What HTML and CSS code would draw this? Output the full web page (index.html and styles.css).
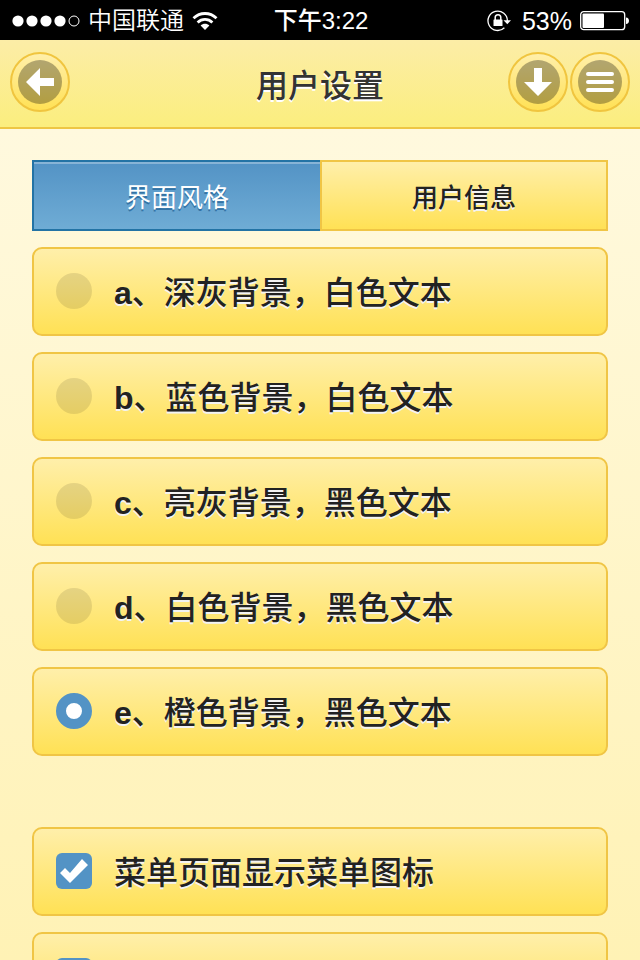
FILE: index.html
```
<!DOCTYPE html>
<html lang="zh-CN">
<head>
  <meta charset="UTF-8">
  <meta name="viewport" content="width=device-width, initial-scale=1">
  <title>用户设置</title>
  <link rel="stylesheet" href="styles.css">
</head>
<body>
  <div class="statusbar">
    <div class="status-left">
      <svg width="68" height="12" viewBox="0 0 68 12" aria-hidden="true">
        <g fill="#fff">
          <circle cx="6" cy="6" r="5.6"/>
          <circle cx="20" cy="6" r="5.6"/>
          <circle cx="34" cy="6" r="5.6"/>
          <circle cx="48" cy="6" r="5.6"/>
        </g>
        <circle cx="62" cy="6" r="5" fill="none" stroke="#fff"/>
      </svg>
      <span class="carrier">中国联通</span>
      <svg width="26" height="20" viewBox="0 0 26 20" fill="none" stroke="#fff" stroke-width="2.8" aria-hidden="true">
        <path d="M1.5 7.3C8 .9 18 .9 24.5 7.3"/>
        <path d="M5.6 11.4c4.2-4 10.6-4 14.8 0"/>
        <path d="M13 19l-4.4-4.5c2.5-2.2 6.3-2.2 8.8 0z" fill="#fff" stroke="none"/>
      </svg>
    </div>
    <div class="clock">下午3:22</div>
    <div class="status-right">
      <svg width="25" height="22" viewBox="0 0 25 22" fill="none" stroke="#fff" aria-hidden="true">
        <path d="M17.4 17.8A9.7 9.7 0 1 1 20.4 11" stroke-width="1.3"/>
        <path d="M16.5 10.2H24l-3.7 4z" fill="#fff" stroke="none"/>
        <rect x="6.5" y="9.5" width="9" height="6.5" rx=".5" fill="#fff" stroke="none"/>
        <path d="M8.2 10V7.500a2.8 2.8 0 0 1 5.6 0V10" stroke-width="1.5"/>
      </svg>
      <span class="percent">53%</span>
      <svg width="50" height="20" viewBox="0 0 50 20" aria-hidden="true">
        <rect x=".7" y=".7" width="44" height="18" rx="3" fill="none" stroke="#fff" stroke-width="1.3"/>
        <rect x="2.5" y="2.5" width="21.5" height="14.5" rx="1" fill="#fff"/>
        <path d="M46 6.500c4 .3 4 6.300 0 6.600z" fill="#fff"/>
      </svg>
    </div>
  </div>

  <header class="header">
    <div class="header-side">
      <button class="round-btn" type="button" aria-label="返回">
        <svg width="44" height="44" viewBox="0 0 44 44"><path d="M8 22L22 8v10h14v8H22v10z" fill="#fff"/></svg>
      </button>
    </div>
    <h1>用户设置</h1>
    <div class="header-side header-right">
      <button class="round-btn" type="button" aria-label="下载">
        <svg width="44" height="44" viewBox="0 0 44 44"><path d="M22 36L8 22h10V8h8v14h10z" fill="#fff"/></svg>
      </button>
      <button class="round-btn" type="button" aria-label="菜单">
        <svg width="44" height="44" viewBox="0 0 44 44" stroke="#fff" stroke-width="4" stroke-linecap="round"><path d="M10 14h24M10 22h24M10 30h24"/></svg>
      </button>
    </div>
  </header>

  <main class="content">
    <nav class="tabs">
      <button class="tab active" type="button">界面风格</button>
      <button class="tab" type="button">用户信息</button>
    </nav>

    <form class="settings">
      <div class="group">
        <label class="option"><input type="radio" name="theme" value="a"><span><b>a</b>、深灰背景，白色文本</span></label>
        <label class="option"><input type="radio" name="theme" value="b"><span><b>b</b>、蓝色背景，白色文本</span></label>
        <label class="option"><input type="radio" name="theme" value="c"><span><b>c</b>、亮灰背景，黑色文本</span></label>
        <label class="option"><input type="radio" name="theme" value="d"><span><b>d</b>、白色背景，黑色文本</span></label>
        <label class="option"><input type="radio" name="theme" value="e" checked><span><b>e</b>、橙色背景，黑色文本</span></label>
      </div>
      <div class="group">
        <label class="option"><input type="checkbox" name="icons" checked><span>菜单页面显示菜单图标</span></label>
        <label class="option"><input type="checkbox" name="more" aria-label="更多设置" checked></label>
      </div>
    </form>
  </main>
</body>
</html>
```
FILE: styles.css
```
* {
  box-sizing: border-box;
}
body {
  margin: 0;
  height: 100vh;
  display: flex;
  flex-direction: column;
  overflow: hidden;
  font-family: "Liberation Sans", "Noto Sans CJK SC", sans-serif;
  color: #222;
  background: #fff2b5;
}

/* status bar */
.statusbar {
  flex: none;
  height: 40px;
  padding: 0 10px 0 12px;
  display: grid;
  grid-template-columns: 1fr auto 1fr;
  align-items: center;
  background: #000;
  color: #fff;
  font-size: 24px;
  line-height: 42px;
}
.status-left,
.status-right {
  display: flex;
  align-items: center;
  gap: 8px;
}
.status-right {
  justify-content: flex-end;
}
.carrier {
  font-weight: 350;
}
.clock {
  font-weight: 500;
}
.percent {
  margin-left: 2px;
  font-size: 25px;
}

/* header */
.header {
  flex: none;
  height: 89px;
  padding: 12px 10px 0;
  display: grid;
  grid-template-columns: 1fr auto 1fr;
  align-items: start;
  background: linear-gradient(#fceda7, #fbee7e);
  border-bottom: 2px solid #eec644;
}
.header h1 {
  margin: 0;
  font-size: 32px;
  font-weight: 500;
  line-height: 68px;
  color: #333;
  text-shadow: 0 2px 0 #fff;
}
.header-side {
  display: flex;
  gap: 2px;
}
.header-right {
  justify-content: flex-end;
}
.round-btn {
  width: 60px;
  height: 60px;
  padding: 0;
  display: flex;
  align-items: center;
  justify-content: center;
  border: 2px solid #f0c53f;
  border-radius: 50%;
  background: linear-gradient(#ffefaa, #ffe155);
  cursor: pointer;
}
.round-btn svg {
  border-radius: 50%;
  background: rgba(0, 0, 0, 0.3);
}

/* content */
.content {
  flex: 1;
  min-height: 0;
  padding: 31px 32px 0;
  overflow: hidden;
  background: linear-gradient(#fff9de, #fff2b5);
}
.tabs {
  display: grid;
  grid-template-columns: 1fr 1fr;
  margin-bottom: 16px;
}
.tab {
  height: 71px;
  padding: 0;
  font-family: inherit;
  font-size: 26px;
  font-weight: 500;
  color: #222;
  text-shadow: 0 2px 0 #f3f3f3;
  border: 2px solid #f0c545;
  background: linear-gradient(#ffefaa, #ffe155);
  cursor: pointer;
}
.tab.active {
  color: #fff;
  font-weight: 400;
  text-shadow: 0 2px 0 #3373a5;
  border-color: #2373a5;
  border-right: 0;
  background: linear-gradient(#5393c5, #6facd5);
  box-shadow: inset 0 2px 0 rgba(255, 255, 255, 0.3);
}
.group {
  display: flex;
  flex-direction: column;
  gap: 16px;
  margin-bottom: 71px;
}
.option {
  height: 89px;
  padding: 0 22px 2px;
  display: flex;
  align-items: center;
  gap: 22px;
  font-size: 32px;
  font-weight: 500;
  text-shadow: 0 2px 0 #f3f3f3;
  border: 2px solid #f0c545;
  border-radius: 10px;
  background: linear-gradient(#ffefaa, #ffe155);
  cursor: pointer;
}
.option span {
  padding-bottom: 2px;
}
.option input {
  appearance: none;
  flex: none;
  width: 36px;
  height: 36px;
  margin: 0;
  background-color: rgba(0, 0, 0, 0.1);
}
.option input[type="radio"] {
  border-radius: 50%;
}
.option input[type="radio"]:checked {
  background: #fff;
  border: 10px solid #5393c5;
}
.option input[type="checkbox"] {
  border-radius: 6px;
}
.option input[type="checkbox"]:checked {
  background: #5393c5 url("data:image/svg+xml,%3Csvg xmlns='http://www.w3.org/2000/svg' viewBox='0 0 36 36'%3E%3Cpath d='M4 20l5-5 5 5L26 6l6 6-18 18z' fill='%23fff'/%3E%3C/svg%3E");
}
```
